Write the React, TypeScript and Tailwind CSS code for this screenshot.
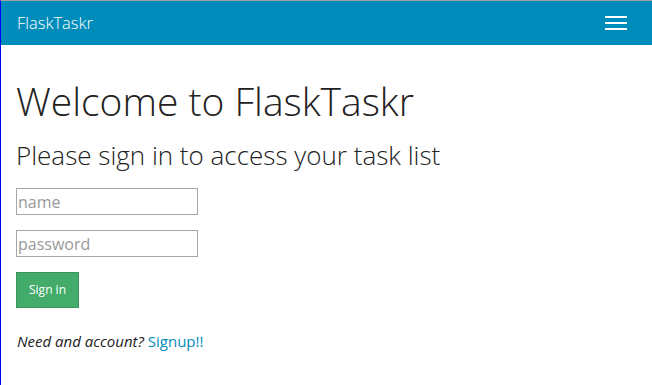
export default function App() {
  return (
    <div className="min-h-screen bg-white border-l border-l-[#0000ff] border-t border-t-[#a0a0a0]" style={{ fontFamily: '"Open Sans", sans-serif' }}>
      {/* Navbar */}
      <nav className="h-[44px] bg-[#008cba] flex items-center justify-between pl-4 pr-[25px]">
        <span className="text-white text-[16.5px] font-light leading-none">FlaskTaskr</span>
        <button className="flex flex-col gap-[4px] w-[22px]">
          <span className="block h-[2px] bg-white" />
          <span className="block h-[2px] bg-white" />
          <span className="block h-[2px] bg-white" />
        </button>
      </nav>

      {/* Content */}
      <div className="pl-[15px] pr-4 pt-[36px]">
        <h1 className="text-[39px] font-light text-[#222222] leading-none">Welcome to FlaskTaskr</h1>
        <h2 className="text-[26px] font-light text-[#222222] leading-none mt-[22px]">Please sign in to access your task list</h2>

        <form className="mt-[20px] flex flex-col items-start">
          <input
            type="text"
            placeholder="name"
            className="w-[182px] h-[27px] border border-[#a6a6a6] px-[1px] text-[16px] placeholder:text-[#999999] outline-none"
          />
          <input
            type="password"
            placeholder="password"
            className="w-[182px] h-[27px] border border-[#a6a6a6] px-[1px] text-[16px] placeholder:text-[#999999] outline-none mt-[15px]"
          />
          <button
            type="button"
            className="mt-[15px] w-[63px] h-[36px] bg-[#43ac6a] border border-[#3a945b] text-white text-[12px]"
          >
            Sign in
          </button>
        </form>

        <p className="mt-[22px] pl-px text-[15px] text-[#222222]">
          <em>Need and account?</em> <a href="#" className="text-[#008cba]">Signup!!</a>
        </p>
      </div>
    </div>
  );
}
